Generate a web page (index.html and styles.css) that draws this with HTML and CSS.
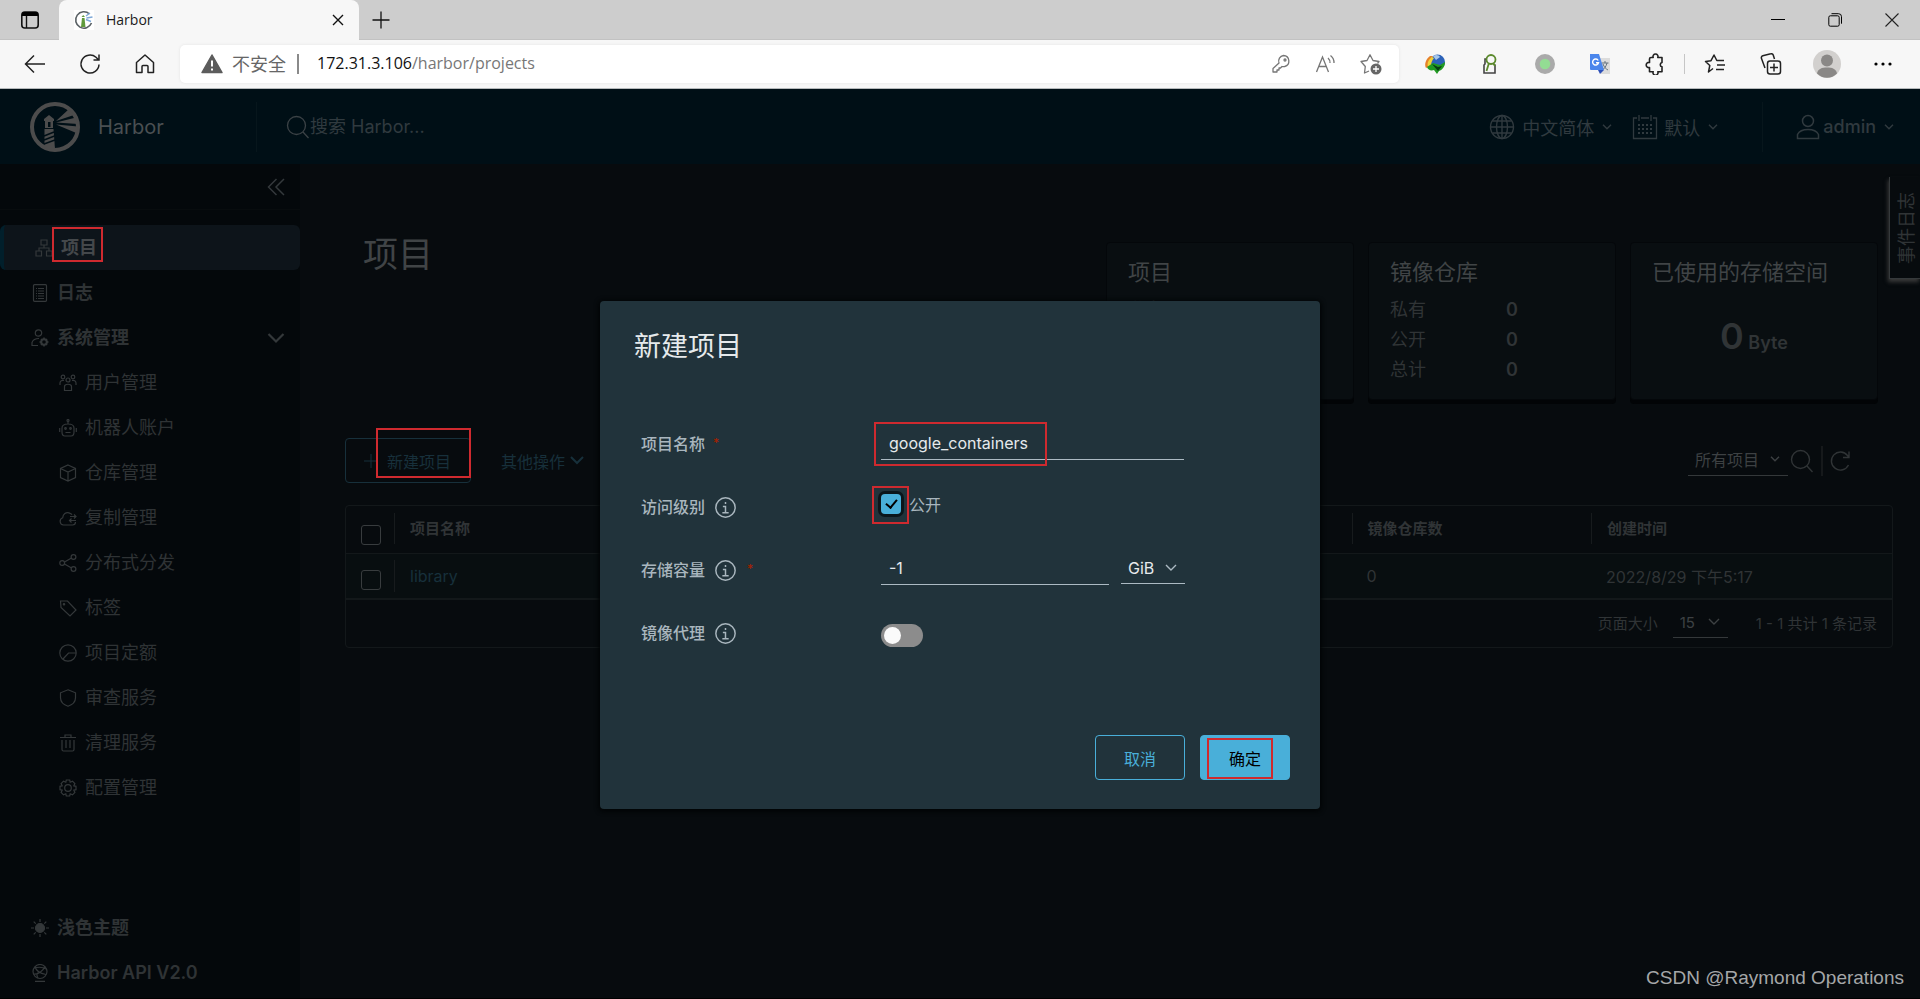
FILE: index.html
```html
<!DOCTYPE html>
<html lang="zh-CN">
<head>
<meta charset="utf-8">
<title>Harbor</title>
<link rel="stylesheet" href="styles.css">
</head>
<body>
<div class="browser">
  <div class="tabstrip">
    <button class="chrome-btn tab-menu" aria-label="标签页操作"><svg width="20" height="20" viewBox="0 0 20 20"><rect x="1.8" y="2" width="16.4" height="16" rx="3" fill="none" stroke="#111" stroke-width="1.6"/><path d="M2 6V4a2 2 0 0 1 2-2h12a2 2 0 0 1 2 2v2z" fill="#000"/><path d="M6.5 6v12" stroke="#111" stroke-width="1.4"/></svg></button>
    <div class="tab">
      <svg class="favicon" width="20" height="20" viewBox="0 0 20 20"><rect width="20" height="20" fill="#fff"/><path d="M15.500 4A8.200 8.200 0 1 0 17.500 13" fill="none" stroke="#5a6165" stroke-width="1.600"/><path d="M8 8h2.500l1 9H7z" fill="#5f9a3c"/><path d="M7.500 7l1.700-2L11 7z" fill="#5f9a3c"/><path d="M12 6l4-3M12.500 8l6-1M12 9.500l5 2" stroke="#7ea9d8" stroke-width="1.400"/></svg>
      <span class="tab-title">Harbor</span>
      <button class="chrome-btn" aria-label="关闭标签页"><svg width="12" height="12" viewBox="0 0 12 12"><path d="M1 1l10 10M11 1L1 11" stroke="#111" stroke-width="1.4"/></svg></button>
    </div>
    <button class="chrome-btn new-tab" aria-label="新建标签页"><svg width="18" height="18" viewBox="0 0 18 18"><path d="M9 .5v17M.5 9h17" stroke="#111" stroke-width="1.3"/></svg></button>
    <div class="window-controls">
      <button class="chrome-btn" aria-label="最小化"><svg width="14" height="14" viewBox="0 0 14 14"><path d="M0 6.500h14" stroke="#000"/></svg></button>
      <button class="chrome-btn" aria-label="还原"><svg width="14" height="14" viewBox="0 0 14 14" fill="none" stroke="#000"><rect x=".8" y="2.800" width="10.400" height="10.400" rx="1.500"/><path d="M3.500.7h7a3 3 0 0 1 3 3v7"/></svg></button>
      <button class="chrome-btn" aria-label="关闭"><svg width="14" height="14" viewBox="0 0 14 14"><path d="M.5.5l13 13M13.500.5l-13 13" stroke="#222" stroke-width="1.100"/></svg></button>
    </div>
  </div>
  <div class="toolbar">
    <button class="chrome-btn nav-btn" aria-label="后退"><svg width="22" height="20" viewBox="0 0 22 20" fill="none" stroke="#222" stroke-width="1.500"><path d="M21 10H1.500M10 1.500L1.500 10l8.500 8.500"/></svg></button>
    <button class="chrome-btn nav-btn" aria-label="刷新"><svg width="22" height="22" viewBox="0 0 22 22" fill="none" stroke="#222" stroke-width="1.500"><path d="M20 11.500a9 9 0 1 1-3-7.200l2.500 2.400M20 1.500V7h-5.500"/></svg></button>
    <button class="chrome-btn nav-btn" aria-label="主页"><svg width="20" height="22" viewBox="0 0 20 22" fill="none" stroke="#222" stroke-width="1.500" stroke-linejoin="round"><path d="M1.500 9.500L10 2l8.500 7.500v10h-5.500v-6a1 1 0 0 0-1-1H8a1 1 0 0 0-1 1v6H1.500z"/></svg></button>
    <div class="address">
      <svg width="22" height="20" viewBox="0 0 22 20"><path d="M11 1l10 17.500H1z" fill="#5c5c5c" stroke="#5c5c5c" stroke-width="1.500" stroke-linejoin="round"/><path d="M11 6.500v6M11 14.500v2" stroke="#fff" stroke-width="2"/></svg>
      <span class="insecure">不安全</span>
      <span class="address-sep"></span>
      <span class="url"><b>172.31.3.106</b>/harbor/projects</span>
      <div class="address-actions">
        <button class="chrome-btn" aria-label="密码"><svg width="20" height="20" viewBox="0 0 20 20" fill="none" stroke="#767676" stroke-width="1.300" stroke-linejoin="round"><path d="M12.500 1.500a5.600 5.600 0 0 1 1.200 11c-1 .3-2 .2-2.700 0L9.500 14H8v2H6v2H2v-3.500L8 9a5.600 5.600 0 0 1 4.500-7.500z"/><circle cx="14" cy="6" r="1"/></svg></button>
        <button class="chrome-btn" aria-label="朗读"><svg width="22" height="20" viewBox="0 0 22 20" fill="none" stroke="#767676" stroke-width="1.300"><path d="M1.500 18L7.500 3l6 15M3.800 12.500h7.500M13 4a6 6 0 0 1 2 5M15.500 1.500A9 9 0 0 1 19 9"/></svg></button>
        <button class="chrome-btn" aria-label="收藏"><svg width="22" height="22" viewBox="0 0 22 22" fill="none" stroke="#767676" stroke-width="1.300" stroke-linejoin="round"><path d="M9 18l-4.500 2 .8-6.500L1 8.500l6-1L10 1.800l3 5.700 6 1-1.500 2"/><circle cx="16" cy="16" r="5.500" fill="#666" stroke="none"/><path d="M16 13v6M13 16h6" stroke="#fff"/></svg></button>
      </div>
    </div>
    <div class="extensions">
      <span class="ext"><svg width="22" height="20" viewBox="0 0 22 20"><circle cx="13.500" cy="8" r="7.500" fill="#2c62b8"/><path d="M9 2c3-2 6-1 7 1l-4 3z" fill="#a7c7ea"/><path d="M6 2C2 5 0 10 2 14l4-2C5 8 6 5 9 2z" fill="#e6812a"/><path d="M8 3C4 6 3 9 4 13l3-1C7 9 8 6 10 4z" fill="#efd43a"/><path d="M3 13l6-4 7 2 5-3c0 5-3 8-6 9l-2 3-3-4c-3 1-6 0-7-3z" fill="#219a22"/><path d="M8 10l6 3 4-1-4 5z" fill="#073e12"/></svg></span>
      <span class="ext"><svg width="16" height="22" viewBox="0 0 16 22" fill="none"><path d="M4.500 6H3v5l-1 1v8h11v-8l-1-1" stroke="#444" stroke-width="1.600"/><circle cx="9" cy="6.500" r="4.500" fill="#f7f7f7" stroke="#5c8a2d" stroke-width="1.800"/><path d="M7 10l-2.500 8M11 10l2 3" stroke="#5c8a2d" stroke-width="1.800"/></svg></span>
      <span class="ext"><svg width="22" height="22" viewBox="0 0 22 22"><circle cx="11" cy="11" r="10" fill="#aaa"/><circle cx="11" cy="11" r="5.300" fill="#93dc93"/></svg></span>
      <span class="ext"><svg width="22" height="22" viewBox="0 0 22 22"><path d="M8 5h13v16H12z" fill="#dcdcdc"/><path d="M12.500 10h7M16 8v2M18 10c-1 4-3 6-5 7M14 11c1 3 3 5 5 6" stroke="#65737f" fill="none"/><path d="M1 1h9l5 16H2a1 1 0 0 1-1-1z" fill="#4b86ec"/><path d="M9 17h6l-4 4z" fill="#2c4fb8"/><path d="M9.200 7.500a3 3 0 1 0 .3 2.300H7" stroke="#fff" stroke-width="1.400" fill="none"/></svg></span>
      <span class="ext"><svg width="20" height="22" viewBox="0 0 20 22" fill="none" stroke="#222" stroke-width="1.600" stroke-linejoin="round"><path d="M6 4.500h2.200a2.500 2.500 0 1 1 4.600 0H17v5a2.200 2.200 0 0 0 0 4.300v5h-4.200a2.500 2.500 0 1 1-4.600 0H4.500v-4.300a2.600 2.600 0 1 1 0-5V6A1.500 1.500 0 0 1 6 4.500z"/></svg></span>
      <span class="ext-sep"></span>
      <button class="chrome-btn ext" aria-label="收藏夹"><svg width="22" height="22" viewBox="0 0 22 22" fill="none" stroke="#222" stroke-width="1.500" stroke-linejoin="round"><path d="M9 15.500L4.500 19l1.300-6.500L1.500 8.500l5.500-.8L10 2l2.800 5.500H20M13 12h8M12 16.500h8"/></svg></button>
      <button class="chrome-btn ext" aria-label="集锦"><svg width="22" height="22" viewBox="0 0 22 22" fill="none" stroke="#222" stroke-width="1.500"><rect x="7.500" y="8" width="13" height="13" rx="2.500"/><path d="M14 10.500v8M10 14.500h8M5 15L1.500 5.500a2 2 0 0 1 1.300-2.700l8-2a2 2 0 0 1 2.500 1.500L14.500 6"/></svg></button>
      <button class="chrome-btn ext" aria-label="个人资料"><svg width="28" height="28" viewBox="0 0 28 28"><circle cx="14" cy="14" r="14" fill="#d2d0ce"/><circle cx="14" cy="10.500" r="6" fill="#8a8886"/><path d="M4 23.500c1-5 5-6 10-6s9 1 10 6a14 14 0 0 1-20 0z" fill="#8a8886"/></svg></button>
      <button class="chrome-btn ext" aria-label="设置及其他"><svg width="18" height="4" viewBox="0 0 18 4"><circle cx="2" cy="2" r="1.600"/><circle cx="9" cy="2" r="1.600"/><circle cx="16" cy="2" r="1.600"/></svg></button>
    </div>
  </div>
</div>

<div class="app">
  <header class="header">
    <a class="brand" href="#">
      <svg width="52" height="52" viewBox="0 0 52 52"><circle cx="26" cy="26" r="23" fill="none" stroke="#4c4c4c" stroke-width="4"/><path d="M15 18l5-4 5 4v2H15zM16 20h8v7h-8z" fill="#4c4c4c"/><path d="M19 21h2.500v5H19z" fill="#000f16"/><path d="M15.500 28h9L26 48h-10.500z" fill="#4c4c4c"/><path d="M15 35l10-4M15 39l10.500-4M15 43l11-4" stroke="#000f16" stroke-width="1.400"/><path d="M27 20l13-12 5 6zM27 21.500l20-5 2 6.500zM27 23.500l22 2-.5 7z" fill="#4c4c4c"/></svg>
      <span>Harbor</span>
    </a>
    <label class="search">
      <svg width="24" height="24" viewBox="0 0 24 24" fill="none" stroke="#3b4246" stroke-width="1.300"><circle cx="10.500" cy="10.500" r="9"/><path d="M17 17l5.500 6"/></svg>
      <input type="text" placeholder="搜索 Harbor..." aria-label="搜索 Harbor">
    </label>
    <div class="header-actions">
      <button class="plain lang"><svg width="26" height="26" viewBox="0 0 26 26" fill="none" stroke="#303a3f" stroke-width="1.400"><circle cx="13" cy="13" r="11.500"/><ellipse cx="13" cy="13" rx="5.500" ry="11.500"/><path d="M13 1.500v23M1.500 13h23M3.500 7h19M3.500 19h19"/></svg><span>中文简体</span><svg class="caret" width="10" height="6" viewBox="0 0 10 6"><path d="M1 .8l4 4 4-4"/></svg></button>
      <button class="plain date"><svg width="26" height="26" viewBox="0 0 26 26" fill="none" stroke="#303a3f" stroke-width="1.300"><path d="M5 4H1.500v20.500h23V4H21M9 4h8M7 1v6M19 1v6"/><path d="M6 11h15M6 15h15M6 19h15" stroke-width="2" stroke-dasharray="2 2"/></svg><span>默认</span><svg class="caret" width="10" height="6" viewBox="0 0 10 6"><path d="M1 .8l4 4 4-4"/></svg></button>
      <button class="plain user"><svg width="24" height="26" viewBox="0 0 24 26" fill="none" stroke="#303a3f" stroke-width="1.500"><circle cx="12" cy="7" r="5.500"/><path d="M1.500 24.500v-4c2-4 6-5 10.500-5s8.500 1 10.500 5v4z"/></svg><span>admin</span><svg class="caret" width="10" height="6" viewBox="0 0 10 6"><path d="M1 .8l4 4 4-4"/></svg></button>
    </div>
  </header>

  <div class="body">
    <nav class="sidebar">
      <div class="collapse"><button class="plain" aria-label="收起"><svg width="18" height="18" viewBox="0 0 18 18" fill="none" stroke="#34393c" stroke-width="1.500"><path d="M9.500 1L1.500 9l8 8M17 1L9 9l8 8"/></svg></button></div>
      <a class="item active" href="#"><svg viewBox="0 0 18 18"><path d="M6 1h6v5H6zM1 12h5.500v5H1zM11.500 12H17v5h-5.500zM9 6v3M4 12V9h10v3"/></svg><span class="marked">项目<i class="mark mark-nav"></i></span></a>
      <a class="item" href="#"><svg viewBox="0 0 18 18"><rect x="2.500" y=".7" width="13" height="16.600" rx="1"/><path d="M5 4.500h8M5 7h8M5 9.500h8M5 12h8M5 14.500h8" stroke-dasharray="1 1 6"/></svg><span>日志</span></a>
      <button class="item" type="button"><svg viewBox="0 0 18 18"><circle cx="7.500" cy="4" r="3.200"/><path d="M7 16.500H1v-3c1-3 3-4 7-4"/><circle cx="13" cy="13" r="2.800" stroke-width="2"/><path d="M13 8.500v2M13 15.500v2M8.500 13h2M15.500 13h2M10 10l1 1M15 15l1 1M16 10l-1 1M11 15l-1 1" stroke-width="1.600"/></svg><span>系统管理</span><svg class="chev" viewBox="0 0 18 18"><path d="M1.500 5L9 12.500 16.500 5"/></svg></button>
      <a class="item sub" href="#"><svg viewBox="0 0 18 18"><circle cx="9" cy="6" r="2"/><circle cx="4" cy="3" r="1.800"/><circle cx="14" cy="3" r="1.800"/><path d="M5.500 16.500v-4c0-3 7-3 7 0v4zM1 11V9c0-2 2-3 4-2.500M17 11V9c0-2-2-3-4-2.500"/></svg><span>用户管理</span></a>
      <a class="item sub" href="#"><svg viewBox="0 0 18 18"><path d="M3 13V9c0-3 2-4 6-4s6 1 6 4v4c0 3-1 4-3 4H6c-2 0-3-1-3-4zM9 5V2M.7 9v4M17.300 9v4M6.500 13.500h5"/><circle cx="9" cy="1.500" r="1"/><circle cx="6.500" cy="9.500" r=".8"/><circle cx="11.500" cy="9.500" r=".8"/></svg><span>机器人账户</span></a>
      <a class="item sub" href="#"><svg viewBox="0 0 18 18"><path d="M9 1l7.500 3.500v9L9 17l-7.500-3.500v-9zM1.500 4.500L9 8l7.500-3.500M9 8v9"/></svg><span>仓库管理</span></a>
      <a class="item sub" href="#"><svg viewBox="0 0 18 18"><path d="M16.500 13c0 2-1 3-3 3H4.500a3.700 3.700 0 0 1-.8-7.200C4 5 7 3 10 3.800c1.500.4 2.500 1 3 2M11 7.500h6M15 5.500l2 2-2 2M17 11.500h-6M12.500 9.500l-2 2 2 2"/></svg><span>复制管理</span></a>
      <a class="item sub" href="#"><svg viewBox="0 0 18 18"><circle cx="3.200" cy="9" r="2.400"/><circle cx="14.500" cy="3" r="2.400"/><circle cx="14.500" cy="15" r="2.400"/><path d="M5.500 8l7-4M5.500 10l7 4"/></svg><span>分布式分发</span></a>
      <a class="item sub" href="#"><svg viewBox="0 0 18 18"><path d="M1.500 2h7l8.500 9-6 6-9-8.500z"/><circle cx="5" cy="5.200" r=".7"/></svg><span>标签</span></a>
      <a class="item sub" href="#"><svg viewBox="0 0 18 18"><circle cx="9" cy="9" r="8.200"/><path d="M17 9H9.500L4 15"/></svg><span>项目定额</span></a>
      <a class="item sub" href="#"><svg viewBox="0 0 18 18"><path d="M9 .8l7.500 3v5c0 4-3 7-7.500 8.500-4.500-1.500-7.500-4.500-7.500-8.500v-5z"/></svg><span>审查服务</span></a>
      <a class="item sub" href="#"><svg viewBox="0 0 18 18"><path d="M1 3.500h16M6 3V1h6v2M3 6v9.500c0 1 .5 1.500 1.500 1.500h9c1 0 1.500-.5 1.500-1.500V6M7 6v8M11 6v8"/></svg><span>清理服务</span></a>
      <a class="item sub" href="#"><svg viewBox="0 0 18 18"><circle cx="9" cy="9" r="3.300"/><path d="M7.300 1h3.400l.5 2.200 2.300-1.100 2.400 2.400-1.100 2.300 2.200.5v3.400l-2.200.5 1.100 2.300-2.400 2.400-2.300-1.100-.5 2.200H7.300l-.5-2.200-2.300 1.100-2.400-2.400 1.100-2.300L1 10.700V7.300l2.200-.5L2.100 4.500l2.400-2.400 2.300 1.100z"/></svg><span>配置管理</span></a>
      <div class="sidebar-foot">
        <button class="item" type="button"><svg viewBox="0 0 18 18"><circle cx="9" cy="9" r="4.500" fill="#34383a"/><path d="M9 0v3M9 15v3M0 9h3M15 9h3M2.700 2.700l2 2M13.300 13.300l2 2M15.300 2.700l-2 2M4.700 13.300l-2 2"/></svg><span>浅色主题</span></button>
        <a class="item" href="#"><svg viewBox="0 0 18 18"><circle cx="9" cy="7.500" r="7"/><path d="M4 2.500c1 4 5 7 11 8M14 2.500C12 7 7 11 2.500 10M3 4c4-1 9-1 12 1M7 14c-2-3-1-5 1-6M4 17.300h10"/></svg><span class="latin">Harbor API V2.0</span></a>
      </div>
    </nav>

    <main class="main">
      <button class="event-log plain"><span>事件日志</span></button>
      <section class="summary">
        <h1>项目</h1>
        <div class="cards">
          <article class="card"><h2>项目</h2><dl><dt>私有</dt><dd>0</dd></dl></article>
          <article class="card"><h2>镜像仓库</h2><dl><dt>私有</dt><dd>0</dd><dt>公开</dt><dd>0</dd><dt>总计</dt><dd>0</dd></dl></article>
          <article class="card"><h2>已使用的存储空间</h2><p class="storage"><strong>0</strong> Byte</p></article>
        </div>
      </section>
      <section class="actions">
        <button class="new-project"><svg width="14" height="14" viewBox="0 0 14 14"><path d="M7 0v14M0 7h14"/></svg>新建项目<i class="mark mark-new"></i></button>
        <button class="plain more">其他操作<svg width="14" height="9" viewBox="0 0 14 9"><path d="M1 1l6 6 6-6"/></svg></button>
        <div class="filters">
          <div class="select dim-select"><select aria-label="项目类型"><option>所有项目</option></select><svg class="caret" width="10" height="6" viewBox="0 0 10 6"><path d="M1 .8l4 4 4-4"/></svg></div>
          <button class="plain" aria-label="搜索"><svg width="24" height="24" viewBox="0 0 24 24" fill="none" stroke="#303436" stroke-width="1.400"><circle cx="10.500" cy="10.500" r="9"/><path d="M17 17l5.500 6"/></svg></button>
          <span class="filter-sep"></span>
          <button class="plain" aria-label="刷新"><svg width="20" height="24" viewBox="0 0 20 24" fill="none" stroke="#303436" stroke-width="1.400"><path d="M18.500 16a9 9 0 1 1-1-9.500l1.500 2M19 2.500v6h-6"/></svg></button>
        </div>
      </section>
      <section class="grid">
        <table>
          <colgroup><col class="col-check"><col><col><col><col><col><col class="col-time"></colgroup>
          <thead><tr><th><input type="checkbox" aria-label="全选"></th><th><span>项目名称</span></th><th></th><th></th><th></th><th><span>镜像仓库数</span></th><th><span>创建时间</span></th></tr></thead>
          <tbody><tr><td><input type="checkbox" aria-label="选择 library"></td><td class="first"><a href="#">library</a></td><td></td><td></td><td></td><td>0</td><td>2022/8/29 下午5:17</td></tr></tbody>
        </table>
        <div class="pager">
          <label for="size">页面大小</label>
          <div class="select dim-select size-select"><select id="size"><option>15</option></select><svg class="caret" width="12" height="8" viewBox="0 0 12 8"><path d="M1 1l5 5 5-5"/></svg></div>
          <span>1 - 1 共计 1 条记录</span>
        </div>
      </section>
    </main>
  </div>

  <div class="backdrop">
    <form class="modal" role="dialog" aria-labelledby="dlg-title">
      <h3 id="dlg-title">新建项目</h3>
      <div class="fields">
        <div class="row"><label for="name">项目名称<em>*</em></label><div class="control marked name"><input class="text" id="name" type="text" value="google_containers"><i class="mark mark-name"></i></div></div>
        <div class="row"><label for="pub">访问级别<svg class="info" viewBox="0 0 20 20"><circle cx="10" cy="10" r="9.200"/><path d="M10 4.800v1.800M7.500 9H10v6M7 15h6"/></svg></label><div class="control public"><span class="marked tick"><input id="pub" type="checkbox" checked><i class="mark mark-check"></i></span><label for="pub">公开</label></div></div>
        <div class="row"><label for="quota">存储容量<svg class="info" viewBox="0 0 20 20"><circle cx="10" cy="10" r="9.200"/><path d="M10 4.800v1.800M7.500 9H10v6M7 15h6"/></svg><em>*</em></label><div class="control quota"><input class="text" id="quota" type="text" value="-1"><div class="select unit"><select aria-label="单位"><option>GiB</option></select><svg class="caret" width="12" height="8" viewBox="0 0 12 8"><path d="M1 1l5 5 5-5"/></svg></div></div></div>
        <div class="row"><label for="proxy">镜像代理<svg class="info" viewBox="0 0 20 20"><circle cx="10" cy="10" r="9.200"/><path d="M10 4.800v1.800M7.500 9H10v6M7 15h6"/></svg></label><div class="control proxy"><input class="toggle" id="proxy" type="checkbox" role="switch"></div></div>
      </div>
      <div class="buttons"><button class="btn" type="button">取消</button><button class="btn primary" type="button">确定<i class="mark mark-ok"></i></button></div>
    </form>
  </div>
  <div class="watermark">CSDN @Raymond Operations</div>
</div>
</body>
</html>
```
FILE: styles.css
```css
* { box-sizing: border-box; }
body {
  margin: 0;
  min-height: 100vh;
  display: flex;
  flex-direction: column;
  background: #070b0e;
  color: #303436;
  font-family: Inter, "Noto Sans CJK SC", sans-serif;
  font-size: 16px;
}
button, input, select { font: inherit; color: inherit; }
svg { display: block; flex: none; }
a { color: inherit; text-decoration: none; }
h1, h2, h3, p, dl, dd { margin: 0; font-weight: 400; }
.plain, .chrome-btn {
  display: flex;
  align-items: center;
  justify-content: center;
  padding: 0;
  border: 0;
  background: none;
}

/* browser window */
.browser { font-family: "Open Sans", "Noto Sans CJK SC", sans-serif; color: #1b1b1b; }
.tabstrip { display: flex; height: 40px; background: #cdcdcd; border-bottom: 1px solid #c2c2c2; }
.tab-menu { width: 59px; }
.tab {
  display: flex;
  align-items: center;
  width: 300px;
  height: 40px;
  padding: 0 15px;
  border-radius: 8px 8px 0 0;
  background: #f7f7f7;
  font-size: 14px;
}
.tab-title { flex: 1; padding: 0 0 2px 12px; }
.new-tab { width: 44px; }
.window-controls { display: flex; margin-left: auto; }
.window-controls button { width: 57px; }
.toolbar { display: flex; align-items: center; height: 49px; padding-left: 7px; background: #f7f7f7; border-bottom: 1px solid #b5b9bb; }
.nav-btn { width: 55px; height: 40px; }
.address {
  display: flex;
  align-items: center;
  flex: 1;
  height: 38px;
  margin-left: 8px;
  padding: 0 6px 0 21px;
  border-radius: 5px;
  background: #fff;
  box-shadow: 0 0 3px #e2e2e2;
  color: #666;
}
.insecure { padding: 0 0 2px 9px; font-size: 18px; }
.address-sep { width: 2px; height: 20px; margin: 0 18px 0 11px; background: #8a8a8a; }
.url b { font-weight: 400; color: #111; }
.url { padding-bottom: 2px; color: #777; }
.address-actions { display: flex; margin-left: auto; }
.address-actions button { width: 45px; }
.extensions { display: flex; align-items: center; padding: 0 9px 0 8px; }
.ext { display: flex; justify-content: center; align-items: center; width: 56px; }
span.ext { width: 55px; }
.ext-sep { width: 1px; height: 20px; margin: 0 2px; background: #c6c6c6; }

/* application frame */
.app { position: relative; flex: 1; display: flex; flex-direction: column; border-bottom: 1px solid #000; }
.header { display: flex; align-items: center; height: 75px; background: #000f16; color: #303a3f; }
.brand { display: flex; align-items: center; gap: 17px; width: 257px; height: 50px; padding-left: 29px; border-right: 1px solid #07161c; color: #4a4f52; font-size: 20px; }
.search { display: flex; align-items: center; gap: 0; flex: 1; padding-left: 29px; font-size: 18px; }
.search input { width: 300px; padding: 0; border: 0; background: none; outline: 0; }
.search input::placeholder { color: #303a3f; opacity: 1; }
.header-actions { display: flex; align-items: center; font-size: 18px; }
.caret { fill: none; stroke: currentColor; stroke-width: 1.4; }
.header-actions span { padding-bottom: 2px; }
.lang span { padding: 0 8px 0 7px; }
.date { margin-left: 20px; }
.date span { padding: 0 8px 0 6px; }
.user { height: 50px; margin-left: 44px; padding: 0 26px 0 33px; border-left: 1px solid #07161c; }
.user span { padding: 0 8px 0 3px; font-weight: 500; }
.body { flex: 1; display: flex; }

/* sidebar */
.sidebar { display: flex; flex-direction: column; width: 300px; background: #04080b; padding-bottom: 3px; }
.collapse { display: flex; justify-content: flex-end; height: 46px; padding-right: 15px; margin-bottom: 15px; border-bottom: 1px solid #080c0e; }
.item {
  display: flex;
  align-items: center;
  gap: 8px;
  width: 100%;
  height: 45px;
  padding: 0 15px 0 31px;
  border: 0;
  background: none;
  font-size: 18px;
  font-weight: 600;
  text-align: left;
  color: #2f3335;
}
.item span { padding-bottom: 3px; }
.item .latin { padding-bottom: 0; }
.item svg { width: 18px; height: 18px; fill: none; stroke: #34383a; stroke-width: 1.2; }
.item .chev { margin-left: auto; stroke-width: 2.2; }
.item.active { padding-left: 31px; border-left: 4px solid #011f2b; border-radius: 6px; background: #0d141a; color: #44484b; }
.sub { padding-left: 59px; font-weight: 400; }
.sidebar-foot { margin-top: auto; }

/* red annotation frames */
.marked { position: relative; }
.mark { position: absolute; border: 2px solid #cf2a2f; pointer-events: none; }
.mark-nav { inset: -6px -6px 0 -9px; }
.mark-new { inset: -11px -1px 4px 30px; }
.mark-name { left: -7px; top: -3px; width: 173px; height: 44px; }
.mark-check { inset: -8px -8px -10px -9px; }
.mark-ok { inset: 2px 16px 0 6px; }

/* main content */
.main { position: relative; flex: 1; padding: 78px 27px 0 45px; }
.event-log {
  position: absolute;
  top: 13px;
  right: 0;
  width: 31px;
  height: 102px;
  border: 1px solid #35393b;
  border-right: 0;
  border-top: 0;
  box-shadow: -1px 3px 4px #3a3a3a;
  background: #070b0e;
  font-size: 18px;
}
.event-log span { writing-mode: vertical-rl; text-orientation: sideways; transform: rotate(180deg); }
.summary { display: flex; justify-content: space-between; padding: 0 15px 0 18px; }
h1 { font-size: 35px; line-height: 24px; color: #404446; }
.cards { display: flex; gap: 14px; }
.card { width: 248px; height: 158px; padding: 13px 21px; border: 1px solid #04070a; border-radius: 4px; background: #090e11; box-shadow: 0 4px 0 #020406; }
.card h2 { font-size: 22px; line-height: 32px; color: #404446; }
.card dl { display: grid; grid-template-columns: 116px 1fr; padding-top: 7px; font-size: 18px; line-height: 30px; }
.card dd { font-weight: 600; }
.storage { padding-top: 28px; text-align: center; font-size: 18px; line-height: 40px; font-weight: 600; }
.storage strong { font-size: 36px; font-weight: 600; }
.actions { display: flex; align-items: center; height: 45px; margin-top: 38px; padding-right: 43px; }
.new-project { position: relative; display: flex; align-items: center; gap: 9px; height: 45px; width: 126px; padding: 0 18px; border: 1px solid #17303b; border-radius: 4px; background: none; color: #17303b; white-space: nowrap; }
.new-project svg, .more svg { fill: none; stroke: #17303b; }
.more { gap: 5px; margin-left: 30px; color: #17303b; }
.more svg { stroke-width: 2; }
.filters { display: flex; align-items: center; gap: 2px; margin-left: auto; }
.filter-sep { width: 2px; height: 30px; margin: 0 5px; background: #16191b; }
.select { position: relative; border-bottom: 1px solid #34383a; }
.select select { width: 100%; height: 30px; padding: 0 7px; border: 0; background: none; appearance: none; outline: 0; }
.select .caret { position: absolute; right: 8px; top: 11px; pointer-events: none; }
.dim-select { width: 100px; color: #3d4143; }
.grid { margin-top: 22px; border: 1px solid #13181a; border-radius: 4px; }
table { width: 100%; border-collapse: collapse; table-layout: fixed; }
.col-check { width: 48px; }
.col-time { width: 301px; }
th, td { height: 47px; padding: 0 0 0 15px; text-align: left; font-weight: 400; border-bottom: 1px solid #13181a; }
td { height: 46px; border-bottom-width: 2px; background: #080e10; }
th { font-size: 15px; font-weight: 600; padding-left: 0; padding-bottom: 2px; }
th:first-child { padding: 4px 0 0 15px; }
th span { display: block; padding-left: 15px; border-left: 1px solid #171b1d; line-height: 31px; }
td.first { padding-left: 0; }
td a { display: block; padding-left: 15px; line-height: 32px; border-left: 1px solid #171b1d; color: #17303b; }
.grid input { display: block; appearance: none; width: 20px; height: 20px; margin: 8px 0 0; border: 1px solid #383c3e; border-radius: 3px; }
.pager { display: flex; align-items: center; justify-content: flex-end; height: 47px; padding: 0 15px 2px; font-size: 15px; }
.pager label { margin-right: 15px; }
.size-select { width: 55px; margin-right: 28px; }

/* dialog */
.backdrop { position: absolute; inset: 0; display: flex; justify-content: center; align-items: flex-start; padding-top: 212px; }
.modal { width: 720px; height: 508px; padding: 26px 30px 29px 34px; border-radius: 4px; background: #21333b; box-shadow: 0 1px 4px 2px #020506; color: #a9b6be; display: flex; flex-direction: column; }
h3 { font-size: 27px; line-height: 40px; color: #e6eaec; }
.fields { padding: 44px 0 0 7px; }
.row { display: flex; align-items: center; height: 63px; }
.row > label { display: flex; align-items: center; width: 240px; font-weight: 500; }
.row em { padding-left: 8px; font-size: 12px; font-style: normal; color: #a32100; }
.info { width: 21px; height: 21px; margin: 3px 0 0 10px; fill: none; stroke: #a9b6be; stroke-width: 1.4; }
.info + em { padding-left: 11px; }
.control { display: flex; align-items: center; }
.name { padding-top: 2px; }
.text { height: 33px; width: 303px; padding: 0 8px; border: 0; border-bottom: 1px solid #acbac3; border-radius: 0; background: none; outline: 0; color: #e6eaec; }
.quota { gap: 12px; }
.quota .text { width: 228px; }
.unit { width: 64px; color: #e6eaec; border-color: #acbac3; }
.unit .caret { stroke: #acbac3; }
.public { padding-bottom: 4px; gap: 8px; }
.tick { display: block; }
.tick input { display: grid; place-content: center; appearance: none; width: 20px; height: 20px; margin: 0; border-radius: 4px; background: #49afd9; box-shadow: 0 0 0 3px #0b161b; }
.tick input::after { content: ""; width: 5px; height: 9px; margin-bottom: 3px; border: solid #000; border-width: 0 2px 2px 0; rotate: 40deg; }
.proxy { padding-top: 7px; }
.toggle { appearance: none; display: flex; width: 42px; height: 23px; margin: 0; padding: 3px; border-radius: 12px; background: #8c8c8c; }
.toggle::after { content: ""; width: 17px; height: 17px; border-radius: 50%; background: #fafafa; }
.buttons { display: flex; justify-content: flex-end; gap: 15px; margin-top: auto; }
.btn { position: relative; width: 90px; height: 45px; border: 1px solid #49afd9; border-radius: 4px; background: none; color: #49afd9; }
.primary { background: #49afd9; color: #000; }
.watermark { position: absolute; right: 16px; bottom: 8px; font: 19px/24px "Liberation Sans", sans-serif; color: #a5a7a8; }
```
